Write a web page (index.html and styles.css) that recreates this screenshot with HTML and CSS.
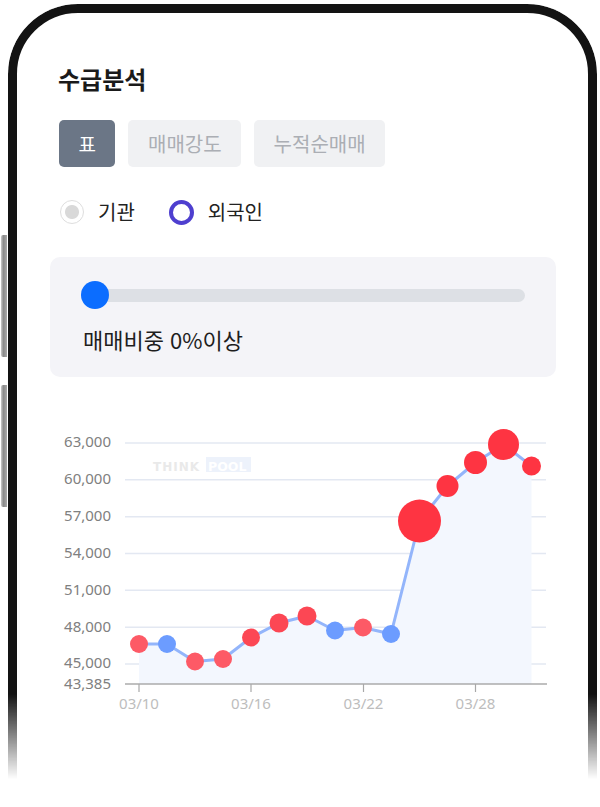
FILE: index.html
```html
<!DOCTYPE html>
<html lang="ko">
<head>
<meta charset="utf-8">
<title>수급분석</title>
<link rel="stylesheet" href="styles.css">
</head>
<body>
<div class="device">
  <div class="side-btn side-btn-1"></div>
  <div class="side-btn side-btn-2"></div>
  <div class="bezel"></div>
  <main class="screen">
    <h1 class="title">수급분석</h1>
    <div class="tabs">
      <button class="tab tab-active">표</button>
      <button class="tab">매매강도</button>
      <button class="tab">누적순매매</button>
    </div>
    <div class="radios">
      <label class="radio-item"><span class="radio radio-disabled"></span><span>기관</span></label>
      <label class="radio-item"><span class="radio radio-checked"></span><span>외국인</span></label>
    </div>
    <section class="card">
      <div class="slider">
        <div class="track"></div>
        <div class="thumb"></div>
      </div>
      <p class="slider-label">매매비중 0%이상</p>
    </section>
    <svg class="chart" width="506" height="330" viewBox="50 400 506 330">
      <g class="grid">
        <line x1="125" y1="443" x2="546" y2="443"/>
        <line x1="125" y1="479.8" x2="546" y2="479.8"/>
        <line x1="125" y1="516.7" x2="546" y2="516.7"/>
        <line x1="125" y1="553.5" x2="546" y2="553.5"/>
        <line x1="125" y1="590.3" x2="546" y2="590.3"/>
        <line x1="125" y1="627.2" x2="546" y2="627.2"/>
        <line x1="125" y1="664" x2="546" y2="664"/>
      </g>
      <g class="ylabels">
        <text x="111" y="447">63,000</text>
        <text x="111" y="484">60,000</text>
        <text x="111" y="521">57,000</text>
        <text x="111" y="558">54,000</text>
        <text x="111" y="594.5">51,000</text>
        <text x="111" y="631.5">48,000</text>
        <text x="111" y="667.5">45,000</text>
        <text x="111" y="688.5">43,385</text>
      </g>
      <g class="watermark">
        <text x="153" y="471" class="wm-think">THINK</text>
        <rect x="206" y="457" width="45" height="15" class="wm-box"/>
        <text x="208" y="470.5" class="wm-pool">POOL</text>
      </g>
      <polygon class="area" points="139,644 167,644 195,661.5 223,659 251,637.5 279,623 307,616 335,630.5 363,627.5 391,634 419.5,521 447.5,486 475.5,462.5 503.5,444.5 531.5,466 531.5,684 139,684"/>
      <polyline class="line" points="139,644 167,644 195,661.5 223,659 251,637.5 279,623 307,616 335,630.5 363,627.5 391,634 419.5,521 447.5,486 475.5,462.5 503.5,444.5 531.5,466"/>
      <line class="axis" x1="125" y1="684" x2="547" y2="684"/>
      <g class="ticks">
        <line x1="139" y1="684" x2="139" y2="692"/>
        <line x1="251" y1="684" x2="251" y2="692"/>
        <line x1="363.5" y1="684" x2="363.5" y2="692"/>
        <line x1="475.5" y1="684" x2="475.5" y2="692"/>
      </g>
      <g class="xlabels">
        <text x="139" y="709">03/10</text>
        <text x="251" y="709">03/16</text>
        <text x="363.5" y="709">03/22</text>
        <text x="475.5" y="709">03/28</text>
      </g>
      <g class="dots">
        <circle class="dot-red-light" cx="139" cy="644" r="9"/>
        <circle class="dot-blue" cx="167" cy="644" r="9"/>
        <circle class="dot-red-light" cx="195" cy="661.5" r="9"/>
        <circle class="dot-red-light" cx="223" cy="659" r="9"/>
        <circle class="dot-red-mid" cx="251" cy="637.5" r="9"/>
        <circle class="dot-red-mid" cx="279" cy="623" r="9.5"/>
        <circle class="dot-red-mid" cx="307" cy="616" r="9.5"/>
        <circle class="dot-blue" cx="335" cy="630.5" r="9"/>
        <circle class="dot-red-light" cx="363" cy="627.5" r="9"/>
        <circle class="dot-blue" cx="391" cy="634" r="9"/>
        <circle class="dot-red" cx="419.5" cy="521" r="21.5"/>
        <circle class="dot-red" cx="447.5" cy="486" r="11"/>
        <circle class="dot-red" cx="475.5" cy="462.5" r="11.5"/>
        <circle class="dot-red" cx="503.5" cy="444.5" r="15.5"/>
        <circle class="dot-red" cx="531.5" cy="466" r="9.5"/>
      </g>
    </svg>
  </main>
</div>
</body>
</html>
```
FILE: styles.css
```css
* { box-sizing: border-box; }
html, body { margin: 0; padding: 0; background: #fff; }
body {
  font-family: "Noto Sans CJK KR", "Noto Sans", sans-serif;
  color: #1e1e1e;
}
.device {
  position: relative;
  width: 600px;
  height: 807px;
  overflow: hidden;
  background: #fff;
}
.bezel {
  position: absolute;
  left: 8px;
  top: 4px;
  width: 589px;
  height: 900px;
  border: 9px solid #131313;
  border-radius: 70px;
  box-shadow: 0 0 0 1px #6e6e6e, 0 0 0 2.5px #c4c4c4;
  pointer-events: none;
  z-index: 2;
  -webkit-mask-image: linear-gradient(to bottom, #000 0, #000 690px, transparent 775px);
  mask-image: linear-gradient(to bottom, #000 0, #000 690px, transparent 775px);
}
.side-btn {
  position: absolute;
  left: 1px;
  width: 6px;
  height: 122px;
  border-radius: 2px 0 0 2px;
  background: linear-gradient(to right, #c9c9c9, #8a8a8a 40%, #a8a8a8);
}
.side-btn-1 { top: 235px; }
.side-btn-2 { top: 385px; }
.screen {
  padding: 64px 44px 0 50px;
  display: flex;
  flex-direction: column;
}
.title {
  margin: 0 0 0 8px;
  font-size: 24px;
  line-height: 30px;
  font-weight: 700;
  color: #1a1a1a;
}
.tabs {
  display: flex;
  gap: 13px;
  margin: 26px 0 0 9px;
}
.tab {
  height: 47px;
  padding: 0 19.5px;
  border: 0;
  border-radius: 5px;
  background: #f0f1f3;
  color: #abaeb4;
  font-family: inherit;
  font-size: 20px;
  line-height: 47px;
}
.tab-active {
  background: #6b7686;
  color: #fff;
  font-size: 19px;
}
.radios {
  display: flex;
  align-items: center;
  gap: 34px;
  margin: 33px 0 0 10px;
  height: 24px;
}
.radio-item {
  display: flex;
  align-items: center;
  gap: 14px;
  font-size: 20px;
  line-height: 24px;
  color: #222;
}
.radio {
  width: 24px;
  height: 24px;
  border-radius: 50%;
  flex: none;
}
.radio-disabled {
  border: 1.5px solid #dedede;
  background: radial-gradient(circle, #d9d9d9 0, #d9d9d9 6.5px, #fff 7.5px);
}
.radio-checked {
  width: 25px;
  height: 25px;
  border: 4.5px solid #4e3fcf;
  background: #fff;
}
.card {
  margin-top: 33px;
  padding: 24px 31px 25px 32px;
  border-radius: 10px;
  background: #f4f4f8;
}
.slider {
  position: relative;
  height: 28px;
  display: flex;
  align-items: center;
}
.track {
  flex: 1;
  height: 13px;
  border-radius: 7px;
  background: #dde0e5;
}
.thumb {
  position: absolute;
  left: -1px;
  top: 0;
  width: 28px;
  height: 28px;
  border-radius: 50%;
  background: #0b6dff;
}
.slider-label {
  margin: 17px 0 0 1px;
  font-size: 22px;
  line-height: 26px;
  color: #1e1e1e;
}
.chart {
  display: block;
  margin-top: 23px;
  overflow: visible;
}
.grid line {
  stroke: #e3e8f2;
  stroke-width: 1.5;
}
.ylabels text {
  font-family: "Noto Sans", "Open Sans", sans-serif;
  font-size: 15px;
  fill: #808080;
  text-anchor: end;
}
.xlabels text {
  font-family: "Noto Sans", "Open Sans", sans-serif;
  font-size: 15px;
  fill: #bdbdbd;
  text-anchor: middle;
}
.axis {
  stroke: #ababab;
  stroke-width: 1.5;
}
.ticks line {
  stroke: #a8a8a8;
  stroke-width: 1.2;
}
.area { fill: #f3f7fe; }
.line {
  fill: none;
  stroke: #93b5fb;
  stroke-width: 3;
  stroke-linejoin: round;
}
.dot-red-light { fill: #fd5a66; }
.dot-red-mid { fill: #fc4754; }
.dot-red { fill: #fe3442; }
.dot-blue { fill: #6c9cff; }
.wm-think {
  font-family: "DejaVu Sans", sans-serif;
  font-size: 12px;
  font-weight: 700;
  letter-spacing: 1px;
  fill: #e9e9e9;
}
.wm-box { fill: #edf2fb; }
.wm-pool {
  font-family: "DejaVu Sans", sans-serif;
  font-size: 12.5px;
  font-weight: 700;
  fill: #ffffff;
}
```
